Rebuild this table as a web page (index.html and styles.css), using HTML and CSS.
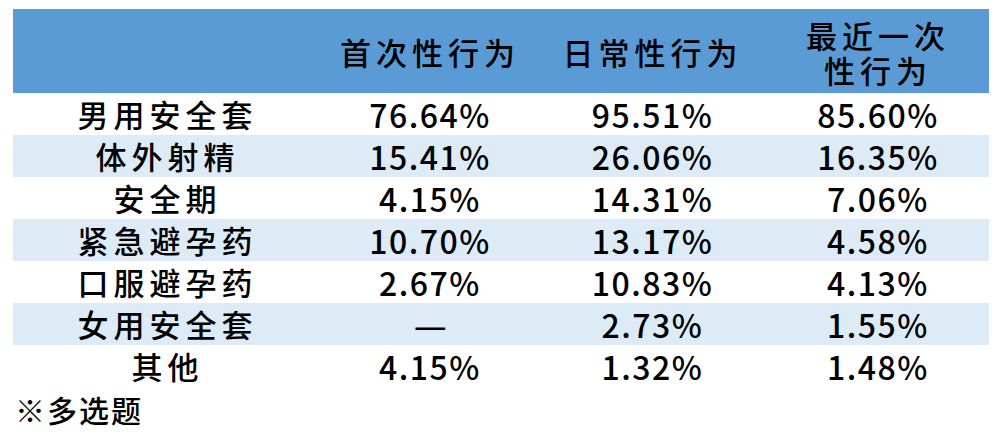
FILE: index.html
```html
<!DOCTYPE html>
<html lang="zh-CN">
<head>
<meta charset="utf-8">
<title>避孕方式</title>
<link rel="stylesheet" href="styles.css">
</head>
<body>
<table class="data">
  <colgroup>
    <col class="c1"><col class="c2"><col class="c3"><col class="c4">
  </colgroup>
  <thead>
    <tr class="head">
      <th></th>
      <th>首次性行为</th>
      <th>日常性行为</th>
      <th class="two"><span class="hl">最近一次</span><span class="hl">性行为</span></th>
    </tr>
  </thead>
  <tbody>
    <tr><td>男用安全套</td><td class="num">76.64%</td><td class="num">95.51%</td><td class="num">85.60%</td></tr>
    <tr class="alt"><td>体外射精</td><td class="num">15.41%</td><td class="num">26.06%</td><td class="num">16.35%</td></tr>
    <tr><td>安全期</td><td class="num">4.15%</td><td class="num">14.31%</td><td class="num">7.06%</td></tr>
    <tr class="alt"><td>紧急避孕药</td><td class="num">10.70%</td><td class="num">13.17%</td><td class="num">4.58%</td></tr>
    <tr><td>口服避孕药</td><td class="num">2.67%</td><td class="num">10.83%</td><td class="num">4.13%</td></tr>
    <tr class="alt"><td>女用安全套</td><td class="num"><span class="dash">—</span></td><td class="num">2.73%</td><td class="num">1.55%</td></tr>
    <tr><td>其他</td><td class="num">4.15%</td><td class="num">1.32%</td><td class="num">1.48%</td></tr>
  </tbody>
</table>
<p class="note">※多选题</p>
</body>
</html>
```
FILE: styles.css
```css
html, body {
  margin: 0;
  padding: 0;
  background: #ffffff;
}
body {
  padding: 9px 11px 0 13px;
  font-family: "Noto Sans CJK SC", "Noto Sans", sans-serif;
  color: #000;
}
.data {
  width: 976px;
  border-collapse: collapse;
  border-spacing: 0;
  table-layout: fixed;
  font-size: 31px;
  font-weight: 500;
  letter-spacing: 5px;
}
.c1 { width: 309px; }
.c2 { width: 216px; }
.c3 { width: 229px; }
.c4 { width: 222px; }
.data th, .data td {
  padding: 0;
  text-align: center;
  vertical-align: middle;
  font-weight: 500;
}
.head {
  background: #5b9bd5;
  height: 84px;
}
.head th {
  line-height: 37px;
  padding-top: 1px;
}
.hl {
  display: block;
  height: 35px;
  line-height: 35px;
}
.data tbody tr {
  height: 42px;
}
.data td {
  line-height: 42px;
}
.data td.num {
  font-size: 32px;
  letter-spacing: 1.5px;
}
.dash {
  display: inline-block;
  letter-spacing: 0;
  transform: scaleX(1.15);
}
.data tr.alt {
  background: #ddebf7;
}
.note {
  margin: 0;
  padding-left: 2px;
  font-size: 30px;
  line-height: 44px;
  letter-spacing: 2px;
  font-weight: 500;
}
```
